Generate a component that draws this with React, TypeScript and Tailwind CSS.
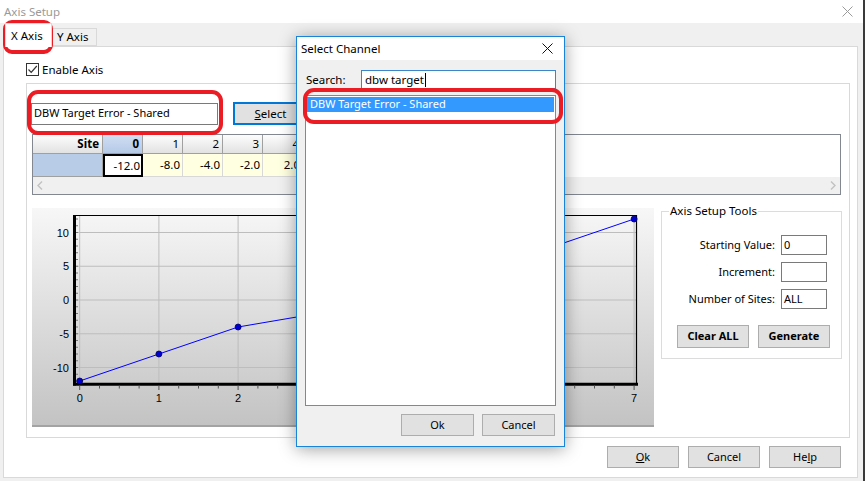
import React from 'react'

const xs = [0, 1, 2, 3, 4, 5, 6, 7]
const vals = [-12, -8, -4, -2, 2, 4, 8, 12]
const px = (i: number): number => 47.7 + 79.2 * i
const py = (v: number): number => 92 - 6.75 * v

function CloseGlyph({ color }: { color: string }): React.JSX.Element {
  return (
    <svg width="11" height="11" viewBox="0 0 11 11">
      <path d="M0.5 0.5 L10.5 10.5 M10.5 0.5 L0.5 10.5" stroke={color} strokeWidth="1" />
    </svg>
  )
}

function WinButton({
  children,
  className = ''
}: {
  children: React.ReactNode
  className?: string
}): React.JSX.Element {
  return (
    <div
      className={`flex h-[22px] w-[72px] items-center justify-center border border-[#adadad] bg-[#e1e1e1] text-[11px] text-black ${className}`}
    >
      {children}
    </div>
  )
}

function Grid(): React.JSX.Element {
  const cells = ['-12.0', '-8.0', '-4.0', '-2.0', '2.0', '4.0', '8.0', '12.0']
  return (
    <div className="ml-[5px] mt-[9px] flex h-[61px] w-[809px] flex-col border border-[#828790] bg-white">
      <div className="flex h-[19px]">
        <div className="flex w-[70px] items-center justify-end border-b border-r border-[#a0a0a0] bg-[linear-gradient(#fdfdfd,#e2e2e2)] pr-[3px] text-[11.5px] font-bold">
          Site
        </div>
        {xs.map((i) => (
          <div
            key={i}
            className={
              i === 0
                ? 'flex w-[40px] items-center justify-end border-b border-r border-[#a0a0a0] bg-[linear-gradient(#cfdef2,#b5c9e7)] pr-[3px] text-[11.5px] font-bold'
                : 'flex w-[40px] items-center justify-end border-b border-r border-[#a0a0a0] bg-[linear-gradient(#fdfdfd,#e2e2e2)] pr-[3px] text-[11.5px]'
            }
          >
            {i}
          </div>
        ))}
      </div>
      <div className="flex h-[23px]">
        <div className="w-[70px] border-b border-r border-[#a0a0a0] bg-[#b8cce7]" />
        {cells.map((c, i) => (
          <div
            key={i}
            className={
              i === 0
                ? 'flex w-[40px] items-center justify-end border-2 border-black bg-white pr-[1px] text-[11.5px]'
                : 'flex w-[40px] items-center justify-end border-b border-r border-[#d8d8d8] bg-[#ffffe1] pr-[2px] text-[11.5px]'
            }
          >
            {c}
          </div>
        ))}
      </div>
      <div className="flex h-[17px] items-center justify-between bg-[#f0f0f0] px-[4px]">
        <svg width="6" height="9" viewBox="0 0 6 9">
          <path d="M5 0.5 L1 4.5 L5 8.5" stroke="#c2c2c2" strokeWidth="1.4" fill="none" />
        </svg>
        <svg width="6" height="9" viewBox="0 0 6 9">
          <path d="M1 0.5 L5 4.5 L1 8.5" stroke="#c2c2c2" strokeWidth="1.4" fill="none" />
        </svg>
      </div>
    </div>
  )
}

function Chart(): React.JSX.Element {
  const minor: number[] = []
  for (let q = 0; q <= 28; q++) minor.push(px(0) + (79.2 / 4) * q)
  const yMinor: number[] = []
  for (let v = -12; v <= 12; v++) yMinor.push(py(v))
  return (
    <div className="mt-[4px] h-[219px] w-[622px] border-b-2 border-[#a3a3a3] bg-[linear-gradient(#f7f7f7,#c3c3c3)]">
      <svg width="622" height="217" viewBox="0 0 622 217">
        {xs.map((i) => (
          <line key={'v' + i} x1={px(i)} y1={7} x2={px(i)} y2={175} stroke="#bdbdbd" strokeWidth="1" />
        ))}
        {[10, 5, 0, -5, -10].map((v) => (
          <line key={'h' + v} x1={43} y1={py(v)} x2={604} y2={py(v)} stroke="#bdbdbd" strokeWidth="1" />
        ))}
        <line x1={42.5} y1={7.5} x2={604.5} y2={7.5} stroke="#000" strokeWidth="1.2" />
        <line x1={604.5} y1={7} x2={604.5} y2={176} stroke="#000" strokeWidth="1.2" />
        <line x1={42.5} y1={7} x2={42.5} y2={177.5} stroke="#000" strokeWidth="3" />
        <line x1={41} y1={176.3} x2={606} y2={176.3} stroke="#000" strokeWidth="3" />
        {minor.map((x, k) => (
          <line
            key={'m' + k}
            x1={x}
            y1={177.5}
            x2={x}
            y2={k % 4 === 0 ? 182 : 180.5}
            stroke="#555"
            strokeWidth="1"
          />
        ))}
        {yMinor.map((y, k) => (
          <line key={'ym' + k} x1={44} y1={y} x2={46} y2={y} stroke="#777" strokeWidth="1" />
        ))}
        {[10, 5, 0, -5, -10].map((v) => (
          <text
            key={'yl' + v}
            x={37}
            y={py(v) + 4}
            textAnchor="end"
            fontSize="11"
            fontFamily="'Liberation Sans', Arial, sans-serif"
            fill="#000"
          >
            {v}
          </text>
        ))}
        {xs.map((i) => (
          <text
            key={'xl' + i}
            x={px(i)}
            y={194}
            textAnchor="middle"
            fontSize="11"
            fontFamily="'Liberation Sans', Arial, sans-serif"
            fill="#000"
          >
            {i}
          </text>
        ))}
        <polyline
          points={xs.map((i) => `${px(i)},${py(vals[i])}`).join(' ')}
          fill="none"
          stroke="#0000ff"
          strokeWidth="1"
        />
        {xs.map((i) => (
          <circle key={'p' + i} cx={px(i)} cy={py(vals[i])} r="3" fill="#0000d0" stroke="#000060" strokeWidth="0.8" />
        ))}
      </svg>
    </div>
  )
}

function Tools(): React.JSX.Element {
  const rows = [
    ['Starting Value:', '0'],
    ['Increment:', ''],
    ['Number of Sites:', 'ALL']
  ]
  return (
    <fieldset className="ml-[7px] h-[155px] w-[181px] border border-[#dcdcdc] px-0">
      <legend className="ml-[7px] px-[1px] text-[11.5px] leading-[14px]">Axis Setup Tools</legend>
      <div className="mt-[17px] flex flex-col gap-[7px]">
        {rows.map(([label, value]) => (
          <div key={label} className="flex h-[20px] items-center">
            <div className="w-[113px] text-right text-[11px]">{label}</div>
            <div className="ml-[6px] flex h-[20px] w-[46px] items-center border border-[#7a7a7a] bg-white pl-[2px] text-[11px]">
              {value}
            </div>
          </div>
        ))}
      </div>
      <div className="ml-[15px] mt-[16px] flex gap-[9px]">
        <WinButton className="h-[23px] w-[71px] font-bold">Clear ALL</WinButton>
        <WinButton className="h-[23px] w-[71px] font-bold">Generate</WinButton>
      </div>
    </fieldset>
  )
}

function SelectChannel(): React.JSX.Element {
  return (
    <div className="absolute left-[296px] top-[36px] flex h-[411px] w-[269px] flex-col border border-[#1883d7] bg-[#f0f0f0] shadow-[0_2px_16px_rgba(0,0,0,0.38)]">
      <div className="flex h-[23px] items-center justify-between bg-white pl-[4px] pr-[11px]">
        <span className="text-[11.5px] text-black">Select Channel</span>
        <CloseGlyph color="#111" />
      </div>
      <div className="mt-[10px] flex h-[19px] items-center">
        <span className="ml-[9px] w-[55px] text-[11.5px]">Search:</span>
        <div className="flex h-[19px] w-[195px] items-center border border-[#3b86c8] bg-white pl-[3px] text-[11.5px]">
          dbw target
          <span className="ml-[1px] h-[14px] w-px bg-black" />
        </div>
      </div>
      <div className="ml-[8px] mt-[6px] h-[311px] w-[251px] border border-[#828790] bg-white p-px">
        <div className="flex h-[15px] items-center bg-[#3399ff] pl-[3px] text-[11px] text-white">
          DBW Target Error - Shared
        </div>
      </div>
      <div className="ml-[104px] mt-[8px] flex gap-[8px]">
        <WinButton className="w-[73px]">Ok</WinButton>
        <WinButton className="w-[73px]">Cancel</WinButton>
      </div>
    </div>
  )
}

export default function App(): React.JSX.Element {
  return (
    <div className="relative h-[481px] w-[865px] overflow-hidden bg-[#f0f0f0] font-['Noto_Sans',sans-serif] text-black">
      <div className="flex h-[23px] items-center justify-between bg-white pl-[4px] pr-[12px]">
        <span className="text-[11.5px] text-[#9a9a9a]">Axis Setup</span>
        <CloseGlyph color="#9a9a9a" />
      </div>
      <div className="flex h-[23px] items-end pl-[5px]">
        <div className="relative z-10 -mb-px flex h-[24px] w-[47px] items-center border border-b-0 border-[#d9d9d9] bg-white pl-[5px] text-[11.5px]">
          X Axis
        </div>
        <div className="flex h-[18px] w-[45px] items-center border border-l-0 border-[#d9d9d9] pl-[5px] text-[11.5px]">
          Y Axis
        </div>
      </div>
      <div className="ml-[3px] h-[432px] w-[855px] border border-[#d9d9d9] bg-white">
        <div className="ml-[22px] mt-[16px] flex h-[13px] items-center">
          <div className="flex h-[13px] w-[13px] items-center justify-center border border-[#333] bg-white">
            <svg width="11" height="11" viewBox="0 0 11 11">
              <path d="M1.5 5.5 L4.2 8.3 L9.8 2" stroke="#333" strokeWidth="1.2" fill="none" />
            </svg>
          </div>
          <span className="ml-[3px] text-[11.5px]">Enable Axis</span>
        </div>
        <div className="ml-[22px] mt-[7px] h-[355px] w-[824px] border border-[#d9d9d9] bg-white">
          <div className="ml-[4px] mt-[18px] flex items-center">
            <div className="flex h-[22px] w-[187px] items-center border border-[#7a7a7a] bg-white pl-[2px] text-[11px]">
              DBW Target Error - Shared
            </div>
            <div className="ml-[15px] flex h-[23px] w-[75px] items-center justify-center border-2 border-[#0078d7] bg-[#e1e1e1] text-[11.5px]">
              <span className="underline">S</span>elect
            </div>
          </div>
          <Grid />
          <div className="ml-[5px] mt-[9px] flex items-start">
            <Chart />
            <Tools />
          </div>
        </div>
        <div className="ml-[603px] mt-[8px] flex gap-[9px]">
          <WinButton>
            <span className="underline">O</span>k
          </WinButton>
          <WinButton>Cancel</WinButton>
          <WinButton>
            He<span className="underline">l</span>p
          </WinButton>
        </div>
      </div>
      <div className="absolute right-0 top-0 h-[481px] w-[2px] bg-[#3a3a3a]" />
      <SelectChannel />
      <div className="absolute left-[3px] top-[20px] h-[34px] w-[50px] rounded-[9px] border-4 border-[#ec1c24]" />
      <div className="absolute left-[27px] top-[90px] h-[45px] w-[196px] rounded-[11px] border-4 border-[#ec1c24]" />
      <div className="absolute left-[303px] top-[88px] h-[36px] w-[260px] rounded-[11px] border-4 border-[#ec1c24]" />
    </div>
  )
}
